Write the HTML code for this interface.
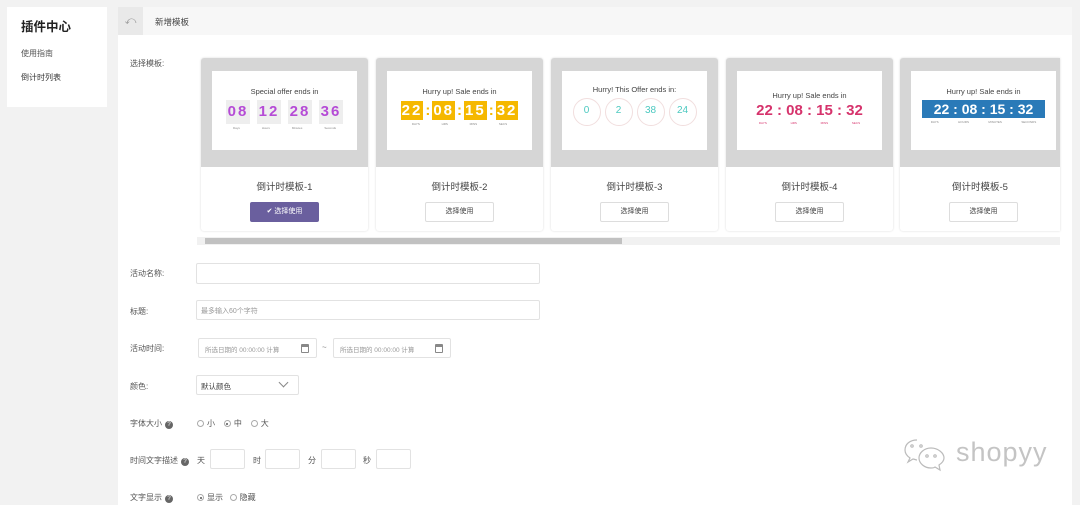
<!DOCTYPE html>
<html><head><meta charset="utf-8"><style>
*{box-sizing:border-box;margin:0;padding:0}
body{width:1080px;height:505px;overflow:hidden;background:#f2f2f2;font-family:"Liberation Sans","Noto Sans CJK SC",sans-serif;color:#555;position:relative;font-size:8px}
.a{position:absolute}
.side{left:7px;top:7px;width:100px;height:100px;background:#fff}
.hdr{left:118px;top:7px;width:954px;height:28px;background:#f7f7f7}
.main{left:118px;top:35px;width:954px;height:470px;background:#fff}
.card{top:58px;width:167px;height:173px;background:#fff;border-radius:3px;box-shadow:0 0 2px rgba(0,0,0,.15);overflow:hidden}
.card .g{position:absolute;left:0;top:0;width:167px;height:109px;background:#d6d6d6}
.card .p{position:absolute;left:11px;top:13px;width:145px;height:79px;background:#fff;text-align:center}
.card .t{position:absolute;top:121px;width:100%;text-align:center;font-size:9.5px;color:#444}
.card .b{position:absolute;top:144px;left:49px;width:69px;height:20px;border:1px solid #ddd;border-radius:2px;text-align:center;line-height:18px;font-size:7px;color:#444;background:#fff}
.hd{font-size:7.5px;color:#444;margin-top:16px}
.lbl{left:130px;font-size:8px;color:#555}
.inp{border:1px solid #e2e2e2;background:#fff;border-radius:2px}
.rad{display:inline-block;width:7px;height:7px;border:1px solid #aaa;border-radius:50%;vertical-align:-1px;margin-right:3px;position:relative}
.rad.on:after{content:"";position:absolute;left:1.5px;top:1.5px;width:2px;height:2px;border-radius:50%;background:#555}
.q{display:inline-block;width:8px;height:8px;border-radius:50%;background:#666;color:#fff;font-size:6px;text-align:center;line-height:8px;vertical-align:0;margin-left:3px}
.cal{position:absolute;right:7px;top:5px;width:8px;height:9px;border:1px solid #888;border-top-width:3px;border-radius:1px}
.d1{width:24px;height:24px;background:#eee;color:#b54bd6;font-weight:bold;font-size:15px;line-height:24px;letter-spacing:2px}
.sm{font-size:3px;color:#888;display:flex;justify-content:space-around;margin-top:2px}
.y{background:#f5b800;padding:1px 1px;letter-spacing:2px}
</style></head><body>
<div class="a side"></div>
<div class="a" style="left:21px;top:16px;font-size:12.5px;font-weight:bold;color:#222">插件中心</div>
<div class="a" style="left:21px;top:48px;font-size:8px;color:#555">使用指南</div>
<div class="a" style="left:21px;top:72px;font-size:8px;color:#333">倒计时列表</div>
<div class="a hdr"></div>
<div class="a" style="left:118px;top:7px;width:25px;height:28px;background:#e9e9e9;color:#999;text-align:center;line-height:28px;font-size:11px">⤺</div>
<div class="a" style="left:155px;top:16px;font-size:8.5px;color:#444">新增模板</div>
<div class="a main"></div>
<div class="a lbl" style="top:58px">选择模板:</div>

<div class="a card" style="left:201px"><div class="g"></div><div class="p"><div class="hd">Special offer ends in</div>
<div style="display:flex;justify-content:center;gap:7px;margin-top:4px">
<div class="d1">08</div><div class="d1">12</div><div class="d1">28</div><div class="d1">36</div></div>
<div class="sm" style="padding:0 10px"><span>Days</span><span>Hours</span><span>Minutes</span><span>Seconds</span></div></div>
<div class="t">倒计时模板-1</div><div class="b" style="background:#6a5f9e;color:#fff;border-color:#6a5f9e">✔ 选择使用</div></div>

<div class="a card" style="left:376px"><div class="g"></div><div class="p"><div class="hd">Hurry up! Sale ends in</div>
<div style="margin-top:5px;font-size:15px;font-weight:bold;color:#fff;display:flex;justify-content:center;align-items:center;gap:2px">
<span class="y">22</span><span style="color:#f5b800">:</span><span class="y">08</span><span style="color:#f5b800">:</span><span class="y">15</span><span style="color:#f5b800">:</span><span class="y">32</span></div>
<div class="sm" style="padding:0 14px"><span>DAYS</span><span>HRS</span><span>MINS</span><span>SECS</span></div></div>
<div class="t">倒计时模板-2</div><div class="b">选择使用</div></div>

<div class="a card" style="left:551px"><div class="g"></div><div class="p"><div class="hd" style="margin-top:14px">Hurry! This Offer ends in:</div>
<div style="display:flex;justify-content:center;gap:4px;margin-top:4px;color:#4cc9c0;font-size:10px">
<div style="width:28px;height:28px;border:1px solid #f1dede;border-radius:50%;line-height:24px">0</div><div style="width:28px;height:28px;border:1px solid #f1dede;border-radius:50%;line-height:24px">2</div><div style="width:28px;height:28px;border:1px solid #f1dede;border-radius:50%;line-height:24px">38</div><div style="width:28px;height:28px;border:1px solid #f1dede;border-radius:50%;line-height:24px">24</div></div></div>
<div class="t">倒计时模板-3</div><div class="b">选择使用</div></div>

<div class="a card" style="left:726px"><div class="g"></div><div class="p"><div class="hd" style="margin-top:20px">Hurry up! Sale ends in</div>
<div style="margin-top:2px;font-size:15px;font-weight:bold;color:#d6336c">22 : 08 : 15 : 32</div>
<div class="sm" style="padding:0 10px;color:#d6336c"><span>DAYS</span><span>HRS</span><span>MINS</span><span>SECS</span></div></div>
<div class="t">倒计时模板-4</div><div class="b">选择使用</div></div>

<div class="a card" style="left:900px;width:160px;border-radius:3px 0 0 3px"><div class="g"></div><div class="p"><div class="hd">Hurry up! Sale ends in</div>
<div style="margin:4px auto 0;width:123px;height:18px;background:#2a7ab8;color:#fff;font-size:14px;font-weight:bold;line-height:18px;white-space:nowrap">22 : 08 : 15 : 32</div>
<div class="sm" style="padding:0 10px"><span>DAYS</span><span>HOURS</span><span>MINUTES</span><span>SECONDS</span></div></div>
<div class="t">倒计时模板-5</div><div class="b">选择使用</div></div>

<div class="a" style="left:197px;top:237px;width:863px;height:8px;background:#f1f1f1"></div>
<div class="a" style="left:205px;top:238px;width:417px;height:6px;background:#c1c1c1"></div>

<div class="a lbl" style="top:268px">活动名称:</div>
<div class="a inp" style="left:196px;top:263px;width:344px;height:21px"></div>
<div class="a lbl" style="top:306px">标题:</div>
<div class="a inp" style="left:196px;top:300px;width:344px;height:20px;padding:5px 4px;font-size:7px;color:#999">最多输入60个字符</div>
<div class="a lbl" style="top:343px">活动时间:</div>
<div class="a inp" style="left:198px;top:338px;width:119px;height:20px;padding:5px 6px;font-size:6.5px;color:#999">所选日期的 00:00:00 计算<div class="cal"></div></div>
<div class="a" style="left:322px;top:343px;color:#888">~</div>
<div class="a inp" style="left:333px;top:338px;width:118px;height:20px;padding:5px 6px;font-size:6.5px;color:#999">所选日期的 00:00:00 计算<div class="cal"></div></div>
<div class="a lbl" style="top:381px">颜色:</div>
<div class="a inp" style="left:196px;top:375px;width:103px;height:20px;padding:5px 4px;font-size:7.5px;color:#444">默认颜色<span style="position:absolute;right:11px;top:3px;width:7px;height:7px;border-right:1px solid #888;border-bottom:1px solid #888;transform:rotate(45deg)"></span></div>
<div class="a lbl" style="top:418px">字体大小<span class="q">?</span></div>
<div class="a" style="left:197px;top:418px;font-size:8px;color:#555"><span class="rad"></span>小&nbsp;&nbsp;&nbsp;&nbsp;<span class="rad on"></span>中&nbsp;&nbsp;&nbsp;&nbsp;<span class="rad"></span>大</div>
<div class="a lbl" style="top:455px">时间文字描述<span class="q">?</span></div>
<div class="a" style="left:197px;top:455px">天</div><div class="a inp" style="left:210px;top:449px;width:35px;height:20px"></div>
<div class="a" style="left:253px;top:455px">时</div><div class="a inp" style="left:265px;top:449px;width:35px;height:20px"></div>
<div class="a" style="left:308px;top:455px">分</div><div class="a inp" style="left:321px;top:449px;width:35px;height:20px"></div>
<div class="a" style="left:363px;top:455px">秒</div><div class="a inp" style="left:376px;top:449px;width:35px;height:20px"></div>
<div class="a lbl" style="top:492px">文字显示<span class="q">?</span></div>
<div class="a" style="left:197px;top:492px"><span class="rad on"></span>显示&nbsp;&nbsp;&nbsp;<span class="rad"></span>隐藏</div>

<svg class="a" style="left:903px;top:436px" width="50" height="40" viewBox="0 0 50 40" fill="none" stroke="#bbb" stroke-width="1.2">
<path d="M14 4c-7 0-12 4-12 10 0 3 2 6 5 8l-2 4 5-3c1 0 3 1 4 1"/><path d="M28 12c-7 0-12 5-12 10s5 10 12 10c2 0 3 0 4-1l5 3-1-5c3-2 5-4 5-7 0-5-6-10-13-10z"/>
<circle cx="9" cy="10" r="1.2"/><circle cx="18" cy="10" r="1.2"/><circle cx="24" cy="20" r="1.2"/><circle cx="32" cy="20" r="1.2"/></svg>
<div class="a" style="left:956px;top:437px;font-size:27px;color:#c4c4c4;letter-spacing:1px">shopyy</div>
</body></html>
